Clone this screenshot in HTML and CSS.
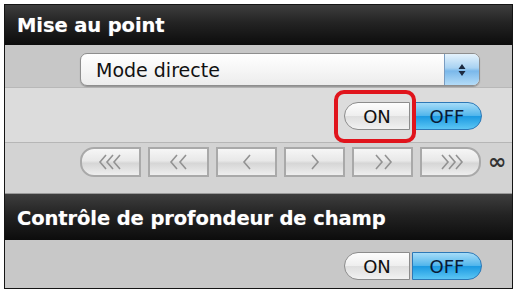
FILE: index.html
```html
<!DOCTYPE html>
<html>
<head>
<meta charset="utf-8">
<link rel="stylesheet" href="styles.css">
</head>
<body>
<div class="panel">
  <div class="hdr">Mise au point</div>
  <div class="row row-select">
    <div class="select">
      <span class="select-text">Mode directe</span>
      <span class="stepper">
        <svg width="10" height="16" viewBox="0 0 10 16"><path d="M5 2 L8.5 7 L1.5 7 Z M5 14 L8.5 9 L1.5 9 Z" fill="#1c2a40"/></svg>
      </span>
    </div>
  </div>
  <div class="row row-toggle">
    <div class="toggle">
      <span class="tbtn ton">ON</span><span class="tbtn toff">OFF</span>
      <span class="mark"></span>
    </div>
  </div>
  <div class="row row-arrows">
    <div class="arrows">
      <span class="abtn first"><svg width="30" height="18" viewBox="0 0 30 18"><path d="M10 2 L4 9 L10 16 M17 2 L11 9 L17 16 M24 2 L18 9 L24 16" fill="none" stroke="#929292" stroke-width="1.6"/></svg></span>
      <span class="abtn"><svg width="24" height="18" viewBox="0 0 24 18"><path d="M10 2 L4 9 L10 16 M19 2 L13 9 L19 16" fill="none" stroke="#929292" stroke-width="1.6"/></svg></span>
      <span class="abtn"><svg width="12" height="18" viewBox="0 0 12 18"><path d="M9 2 L3 9 L9 16" fill="none" stroke="#929292" stroke-width="1.6"/></svg></span>
      <span class="abtn"><svg width="12" height="18" viewBox="0 0 12 18"><path d="M3 2 L9 9 L3 16" fill="none" stroke="#929292" stroke-width="1.6"/></svg></span>
      <span class="abtn"><svg width="24" height="18" viewBox="0 0 24 18"><path d="M5 2 L11 9 L5 16 M14 2 L20 9 L14 16" fill="none" stroke="#929292" stroke-width="1.6"/></svg></span>
      <span class="abtn last"><svg width="30" height="18" viewBox="0 0 30 18"><path d="M6 2 L12 9 L6 16 M13 2 L19 9 L13 16 M20 2 L26 9 L20 16" fill="none" stroke="#929292" stroke-width="1.6"/></svg></span>
    </div>
    <span class="inf">∞</span>
  </div>
  <div class="hdr hdr2">Contrôle de profondeur de champ</div>
  <div class="row row-toggle2">
    <div class="toggle">
      <span class="tbtn ton">ON</span><span class="tbtn toff">OFF</span>
    </div>
  </div>
</div>
</body>
</html>
```

FILE: styles.css
```css
html, body {
  margin: 0;
  padding: 0;
  background: #ffffff;
}
body {
  padding: 4px;
  font-family: "DejaVu Sans", "Liberation Sans", sans-serif;
}
.panel {
  width: 507px;
  height: 283px;
  border: 1px solid #151515;
  display: flex;
  flex-direction: column;
  background: #c8c8c8;
}
.hdr {
  height: 40px;
  box-sizing: border-box;
  padding-left: 12px;
  display: flex;
  align-items: center;
  color: #ffffff;
  font-weight: bold;
  font-size: 19.5px;
  letter-spacing: -0.1px;
  background: linear-gradient(#3e3e3e, #232323 45%, #0c0c0c);
  text-shadow: 0 0 1px rgba(255,255,255,0.4);
}
.hdr2 {
  height: 47px;
  border-top: 1px solid #9a9a9a;
  padding-top: 2px;
}
.row {
  display: flex;
  box-sizing: border-box;
}
.row-select {
  height: 43px;
  background: #c7c7c7;
  padding: 8px 32px 1px 75px;
  border-bottom: 1px solid #b8b8b8;
}
.select {
  flex: 1;
  display: flex;
  align-items: center;
  background: linear-gradient(#ffffff, #f6f6f6 50%, #ececec);
  border: 1px solid #8e8e8e;
  border-radius: 7px;
  box-shadow: 0 1px 1px rgba(0,0,0,0.25);
  overflow: hidden;
}
.select-text {
  flex: 1;
  padding-left: 15px;
  font-size: 19px;
  color: #111111;
}
.stepper {
  width: 34px;
  align-self: stretch;
  display: flex;
  align-items: center;
  justify-content: center;
  background: linear-gradient(#e4f2fc, #a8d2f2 45%, #7ab8ea 55%, #b4dcf8);
  border-left: 1px solid #7a9cc0;
}
.row-toggle {
  height: 55px;
  background: #dcdcdc;
  justify-content: flex-end;
  align-items: center;
  padding-right: 30px;
  padding-top: 2px;
  border-bottom: 1px solid #b6b6b6;
}
.toggle {
  position: relative;
  display: flex;
  gap: 2px;
}
.tbtn {
  height: 28px;
  box-sizing: border-box;
  display: flex;
  align-items: center;
  justify-content: center;
  font-size: 18px;
  color: #111111;
}
.ton {
  width: 66px;
  border: 1px solid #8c8c8c;
  border-radius: 14px 0 0 14px;
  background: linear-gradient(#fdfdfd, #eeeeee 50%, #dedede 52%, #f2f2f2);
}
.toff {
  width: 70px;
  border: 1px solid #2d78b6;
  border-radius: 0 14px 14px 0;
  background: linear-gradient(#a6dcf8, #52b6ec 48%, #1c9ae2 52%, #5cc6f4);
  color: #0a1a36;
}
.mark {
  position: absolute;
  left: -10px;
  top: -12px;
  width: 82px;
  height: 53px;
  box-sizing: border-box;
  border: 4px solid #e0141c;
  border-radius: 10px;
}
.row-arrows {
  height: 50px;
  background: #d3d3d3;
  align-items: flex-start;
  padding-left: 75px;
  padding-top: 4px;
}
.arrows {
  display: flex;
  gap: 7px;
}
.abtn {
  width: 61px;
  height: 30px;
  box-sizing: border-box;
  display: flex;
  align-items: center;
  justify-content: center;
  border: 2px solid #a9a9a9;
  background: linear-gradient(#f6f6f6, #e8e8e8 45%, #d6d6d6 55%, #eeeeee);
}
.abtn.first {
  border-radius: 14px 0 0 14px;
}
.abtn.last {
  border-radius: 0 14px 14px 0;
}
.inf {
  margin-left: 7px;
  margin-top: 2px;
  font-size: 22px;
  font-weight: bold;
  color: #333333;
}
.row-toggle2 {
  height: 48px;
  background: #c8c8c8;
  justify-content: flex-end;
  align-items: center;
  padding-right: 30px;
  padding-top: 4px;
}
```
